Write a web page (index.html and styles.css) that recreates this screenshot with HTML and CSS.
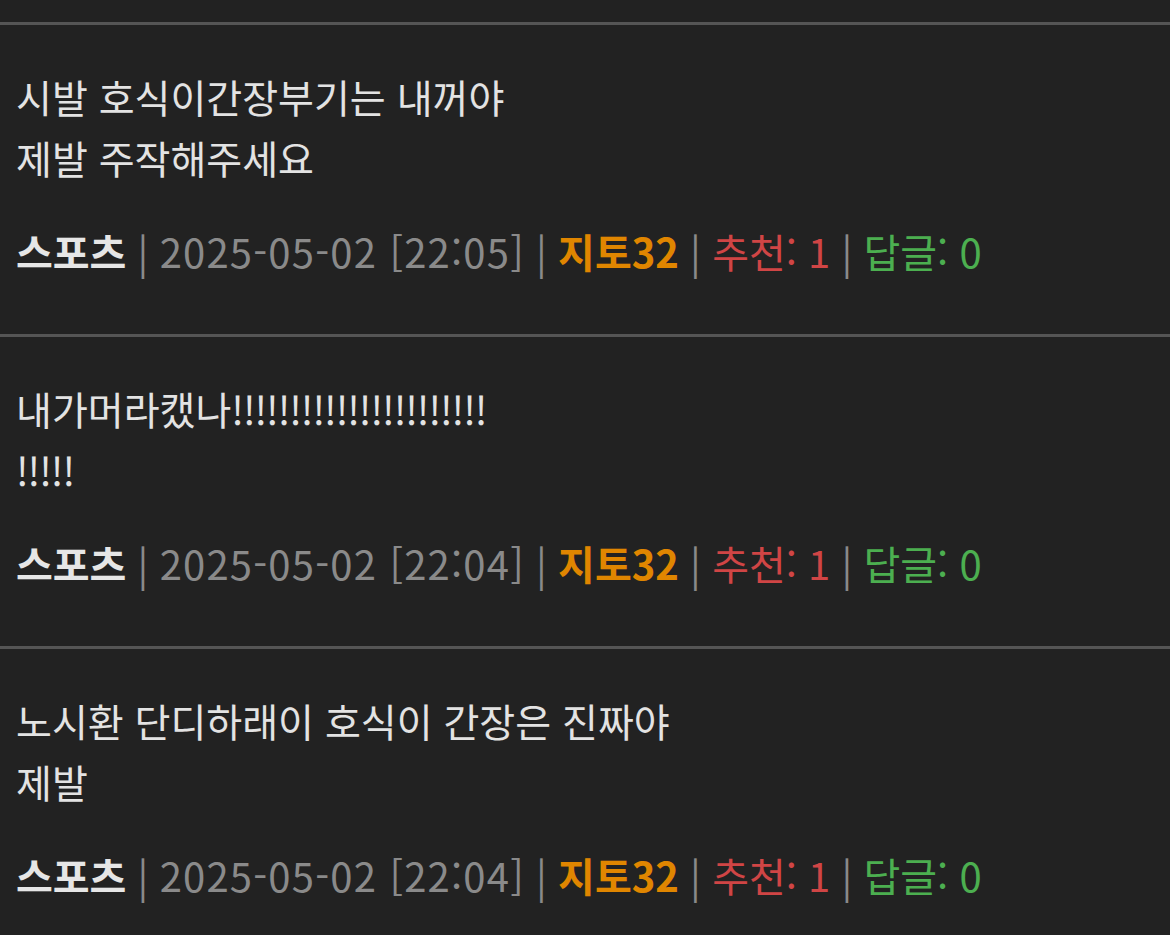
FILE: index.html
```html
<!DOCTYPE html>
<html lang="ko">
<head>
    <meta charset="UTF-8">
    <meta name="viewport" content="width=device-width, initial-scale=1.0">
    <title>댓글</title>
    <link rel="stylesheet" href="styles.css">
</head>
<body>
    <div class="top-space"></div>
    <div class="post">
        <div class="post-text">시발 호식이간장부기는 내꺼야<br>제발 주작해주세요</div>
        <div class="post-meta">
            <span class="cat">스포츠</span> <span class="sep">|</span> <span class="date">2025-05-02 [22:05]</span> <span class="sep">|</span> <span class="author">지토32</span> <span class="sep">|</span> <span class="likes">추천: 1</span> <span class="sep">|</span> <span class="replies">답글: 0</span>
        </div>
    </div>
    <div class="post">
        <div class="post-text">내가머라캤나<span class="bang">!!!!!!!!!!!!!!!!!!!!!!</span><br><span class="bang">!!!!!</span></div>
        <div class="post-meta">
            <span class="cat">스포츠</span> <span class="sep">|</span> <span class="date">2025-05-02 [22:04]</span> <span class="sep">|</span> <span class="author">지토32</span> <span class="sep">|</span> <span class="likes">추천: 1</span> <span class="sep">|</span> <span class="replies">답글: 0</span>
        </div>
    </div>
    <div class="post">
        <div class="post-text">노시환 단디하래이 호식이 간장은 진짜야<br>제발</div>
        <div class="post-meta">
            <span class="cat">스포츠</span> <span class="sep">|</span> <span class="date">2025-05-02 [22:04]</span> <span class="sep">|</span> <span class="author">지토32</span> <span class="sep">|</span> <span class="likes">추천: 1</span> <span class="sep">|</span> <span class="replies">답글: 0</span>
        </div>
    </div>
</body>
</html>
```
FILE: styles.css
```css
body {
    margin: 0;
    background-color: #222222;
    color: #e3e3e3;
    font-family: "Noto Sans CJK KR", "Noto Sans", sans-serif;
    font-size: 39px;
}
.top-space {
    height: 22px;
}
.post {
    border-top: 3px solid #555555;
    padding: 41px 16px 0;
    height: 312px;
    box-sizing: border-box;
}
.post-text {
    line-height: 61px;
}
.bang {
    letter-spacing: -1px;
}
.post-meta {
    margin-top: 33px;
    line-height: 61px;
    white-space: nowrap;
    font-size: 40px;
}
.cat {
    font-weight: bold;
    color: #e6e6e6;
}
.sep {
    color: #8a8a8a;
}
.date {
    color: #8a8a8a;
    letter-spacing: 1.2px;
}
.author {
    font-weight: bold;
    color: #e08600;
}
.likes {
    color: #d04545;
}
.replies {
    color: #4caf50;
}
```
